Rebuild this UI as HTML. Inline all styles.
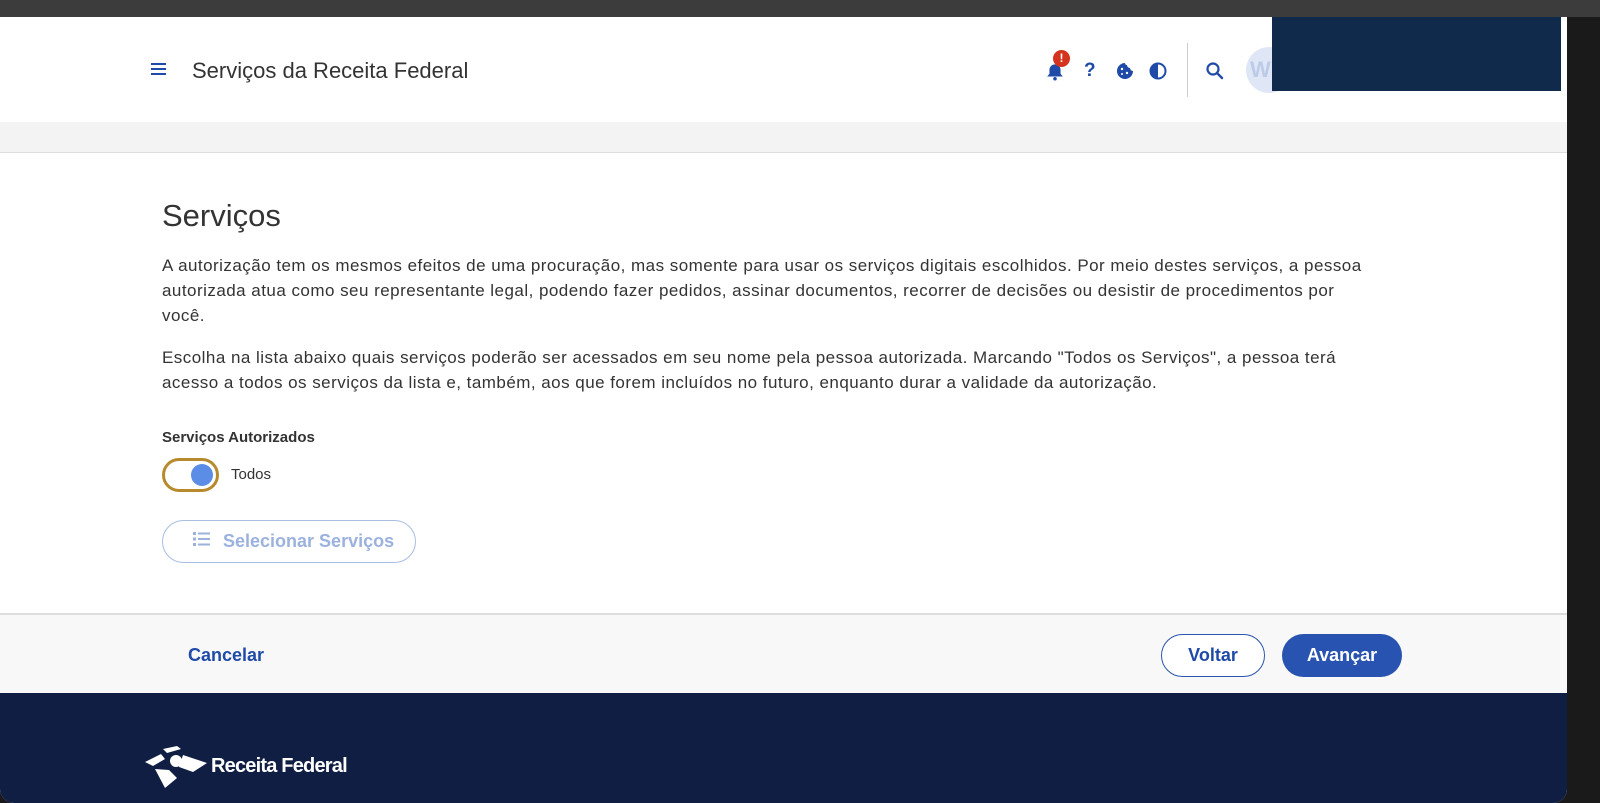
<!DOCTYPE html>
<html><head><meta charset="utf-8"><style>
*{margin:0;padding:0;box-sizing:border-box}
body{width:1600px;height:803px;background:#1a1a1a;font-family:"Liberation Sans",sans-serif;color:#333;position:relative;overflow:hidden}
.top{position:absolute;left:0;top:0;width:1600px;height:17px;background:#3c3c3c}
.page{position:absolute;left:0;top:17px;width:1567px;height:786px;background:#fff;border-radius:0 0 14px 14px;overflow:hidden}
.hdr{position:absolute;left:0;top:0;width:100%;height:105px;background:#fff;box-shadow:0 1px 4px rgba(0,0,0,.12)}
.gray{position:absolute;left:0;top:105px;width:100%;height:31px;background:#f3f3f3;border-bottom:1px solid #ddd}
.t{position:absolute;white-space:nowrap}
.p{font-size:17px;line-height:25px;color:#333;letter-spacing:0.47px}
.foot{position:absolute;left:0;top:596px;width:100%;height:80px;background:#f8f8f8;border-top:2px solid #ddd}
.navy{position:absolute;left:0;top:676px;width:100%;height:110px;background:#0f1e42}
.btn{position:absolute;border-radius:22px;font-weight:bold;font-size:18px;text-align:center}
</style></head><body>
<div class="top"></div>
<div class="page">
<div class="hdr">
 <div class="t" style="left:151px;top:46px;width:15px">
  <div style="height:2px;background:#1f4aa8;margin-bottom:3px"></div><div style="height:2px;background:#1f4aa8;margin-bottom:3px"></div><div style="height:2px;background:#1f4aa8"></div></div>
 <div class="t" style="left:192px;top:41px;font-size:22px;color:#333">Serviços da Receita Federal</div>
 <svg class="t" style="left:1045px;top:44px" width="20" height="20" viewBox="0 0 18 18"><path d="M2 14h14l-2-2.5V8a5 5 0 0 0-10 0v3.5z" fill="#1f4aa8"/><circle cx="9" cy="16" r="1.6" fill="#1f4aa8"/></svg>
 <div class="t" style="left:1053px;top:33px;width:17px;height:17px;border-radius:50%;background:#d4331f;color:#fff;font-size:12px;font-weight:bold;text-align:center;line-height:17px">!</div>
 <div class="t" style="left:1084px;top:43px;font-size:19px;font-weight:bold;color:#1f4aa8">?</div>
 <svg class="t" style="left:1116px;top:45px" width="18" height="18" viewBox="0 0 18 18"><path d="M9 1a8 8 0 1 0 8 8 3 3 0 0 1-3-3 3 3 0 0 1-3-3 2 2 0 0 1-2-2z" fill="#1f4aa8"/><circle cx="6" cy="7" r="1.2" fill="#fff"/><circle cx="11" cy="11" r="1.2" fill="#fff"/><circle cx="6" cy="12" r="1" fill="#fff"/></svg>
 <svg class="t" style="left:1149px;top:45px" width="18" height="18" viewBox="0 0 18 18"><circle cx="9" cy="9" r="7.5" fill="none" stroke="#1f4aa8" stroke-width="2"/><path d="M9 1.5a7.5 7.5 0 0 0 0 15z" fill="#1f4aa8"/></svg>
 <div class="t" style="left:1187px;top:26px;width:1px;height:54px;background:#ccc"></div>
 <svg class="t" style="left:1205px;top:44px" width="20" height="20" viewBox="0 0 20 20"><circle cx="8" cy="8" r="5.5" fill="none" stroke="#1f4aa8" stroke-width="2.2"/><path d="M12 12l5 5" stroke="#1f4aa8" stroke-width="2.4" stroke-linecap="round"/></svg>
 <div class="t" style="left:1246px;top:30px;width:46px;height:46px;border-radius:50%;background:#dfe7f7;color:#bccbe8;font-weight:bold;font-size:22px;line-height:46px;padding-left:4px">W</div>
 <div class="t" style="left:1272px;top:-3px;width:289px;height:77px;background:#0f2a4a"></div>
</div>
<div class="gray"></div>
<div class="t" style="left:162px;top:181px;font-size:31px;color:#333">Serviços</div>
<div class="t p" style="left:162px;top:236px">A autorização tem os mesmos efeitos de uma procuração, mas somente para usar os serviços digitais escolhidos. Por meio destes serviços, a pessoa<br>autorizada atua como seu representante legal, podendo fazer pedidos, assinar documentos, recorrer de decisões ou desistir de procedimentos por<br>você.</div>
<div class="t p" style="left:162px;top:328px">Escolha na lista abaixo quais serviços poderão ser acessados em seu nome pela pessoa autorizada. Marcando "Todos os Serviços", a pessoa terá<br>acesso a todos os serviços da lista e, também, aos que forem incluídos no futuro, enquanto durar a validade da autorização.</div>
<div class="t" style="left:162px;top:412px;font-size:15px;font-weight:bold;color:#333">Serviços Autorizados</div>
<div class="t" style="left:162px;top:441px;width:57px;height:34px;border:3px solid #b88a2e;border-radius:17px;background:#fff"><div style="position:absolute;left:26px;top:3px;width:22px;height:22px;border-radius:50%;background:#5b8ce6"></div></div>
<div class="t" style="left:231px;top:449px;font-size:15px;color:#333">Todos</div>
<div class="t" style="left:162px;top:503px;width:254px;height:43px;border:1.5px solid #a9bde3;border-radius:22px"></div>
<svg class="t" style="left:193px;top:514px" width="18" height="16" viewBox="0 0 18 16"><g fill="#9bb1de"><rect x="0" y="1" width="3" height="3"/><rect x="0" y="6.5" width="3" height="3"/><rect x="0" y="12" width="3" height="3"/><rect x="5" y="1.5" width="12" height="2"/><rect x="5" y="7" width="12" height="2"/><rect x="5" y="12.5" width="12" height="2"/></g></svg>
<div class="t" style="left:223px;top:514px;font-size:18px;font-weight:bold;color:#9bb1de">Selecionar Serviços</div>
<div class="foot">
 <div class="t" style="left:188px;top:30px;font-size:18px;font-weight:bold;color:#1f4aa8">Cancelar</div>
 <div class="btn" style="left:1161px;top:19px;width:104px;height:43px;border:1.5px solid #2a55b0;background:#fff;color:#1f4aa8;line-height:40px">Voltar</div>
 <div class="btn" style="left:1282px;top:19px;width:120px;height:43px;background:#2853b0;color:#fff;line-height:43px">Avançar</div>
</div>
<div class="navy">
 <svg class="t" style="left:143px;top:52px" width="70" height="45" viewBox="0 0 70 45"><g fill="#fff"><path d="M20 4l14-3 4 3-14 4z"/><path d="M2 17l16-8 4 5-12 7z"/><circle cx="33" cy="16" r="6"/><path d="M40 10l24 8-14 9-14-5z"/><path d="M12 24l14 1 8 8-12 10z"/></g></svg>
 <div class="t" style="left:211px;top:62px;font-size:20px;font-weight:bold;color:#fff;letter-spacing:-0.8px">Receita Federal</div>
</div>
</div>
</body></html>
